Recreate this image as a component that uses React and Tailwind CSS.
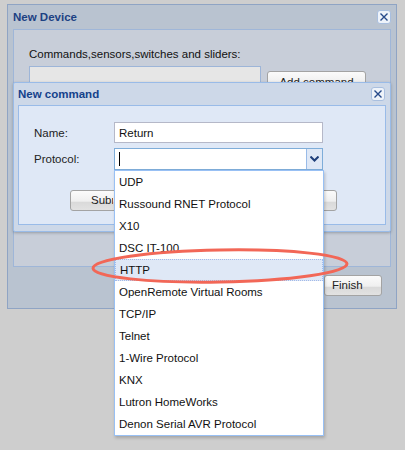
import React from "react";

const protocols = [
  "UDP",
  "Russound RNET Protocol",
  "X10",
  "DSC IT-100",
  "HTTP",
  "OpenRemote Virtual Rooms",
  "TCP/IP",
  "Telnet",
  "1-Wire Protocol",
  "KNX",
  "Lutron HomeWorks",
  "Denon Serial AVR Protocol",
];

function CloseBtn() {
  return (
    <div className="flex h-[14px] w-[14px] items-center justify-center rounded-[3px] border border-[#a9bfdf] bg-[#eef3fa]">
      <svg width="10" height="10" viewBox="0 0 10 10">
        <path d="M1.5 1.5 L8.5 8.5 M8.5 1.5 L1.5 8.5" stroke="#264a8a" strokeWidth="1.4" />
      </svg>
    </div>
  );
}

function Btn({ children, className = "" }) {
  return (
    <div
      className={`flex h-[21px] items-center overflow-hidden rounded-[3px] border border-[#a3a3a3] bg-[linear-gradient(#fbfbfb_0%,#efefef_55%,#d9d9d9_56%,#e2e2e2_100%)] pt-[1px] text-[11.5px] text-[#222] ${className}`}
    >
      {children}
    </div>
  );
}

export default function App() {
  return (
    <div className="relative h-[450px] w-[405px] overflow-hidden bg-[#cecece] pt-[4px] pl-[7px] font-['Liberation_Sans',Arial,sans-serif]">
      {/* New Device window (masked) */}
      <div className="flex h-[305px] w-[390px] flex-col border border-[#8fa4c4] bg-[#b9c3d0]">
        <div className="flex h-[24px] items-center justify-between pl-[5px] pr-[5px]">
          <span className="pt-[2px] text-[11.5px] font-bold text-[#1d4183]">New Device</span>
          <div className="mt-[-1px]">
            <CloseBtn />
          </div>
        </div>
        <div className="mx-[5px] h-[238px] border border-[#9fb6d8] bg-[#c8ced9] px-[15px] pt-[16px]">
          <div className="text-[11.5px] text-[#111]">Commands,sensors,switches and sliders:</div>
          <div className="mt-[3px] flex items-start gap-[6px]">
            <div className="h-[60px] w-[232px] border border-[#9db5d8] bg-[#e6e6e6]" />
            <Btn className="mt-[5px] w-[99px] justify-center">Add command</Btn>
          </div>
        </div>
        <div className="flex flex-1 items-start justify-end pr-[14px] pt-[8px]">
          <Btn className="w-[58px] pl-[7px]">Finish</Btn>
        </div>
      </div>

      {/* New command window */}
      <div className="absolute left-[13px] top-[82px] flex h-[150px] w-[378px] flex-col rounded-[2px] border border-[#99bbe8] bg-[#cdd8e8] shadow-[0_1px_3px_rgba(0,0,0,0.25)]">
        <div className="flex h-[22px] items-center justify-between pl-[4px] pr-[5px]">
          <span className="pt-[2px] text-[11.5px] font-bold text-[#15428b]">New command</span>
          <CloseBtn />
        </div>
        <div className="mx-[4px] h-[120px] border border-[#99bbe8] bg-[#dfe8f6] pt-[16px]">
          <div className="flex items-center">
            <span className="w-[95px] pl-[15px] pt-[2px] text-[11.5px] text-[#222]">Name:</span>
            <div className="flex h-[21px] w-[209px] items-center border border-[#b5b8c8] bg-white pl-[4px] pt-[2px] text-[11.5px] text-[#111]">
              Return
            </div>
          </div>
          <div className="mt-[5px] flex items-center">
            <span className="w-[95px] pl-[15px] pt-[2px] text-[11.5px] text-[#222]">Protocol:</span>
            <div className="flex h-[22px] w-[209px] border border-[#7eadd9] bg-white">
              <div className="flex flex-1 items-center pl-[4px]">
                <div className="h-[14px] w-px bg-black" />
              </div>
              <div className="flex w-[16px] items-center justify-center border-l border-[#99bbe8] bg-[#dfe8f6]">
                <svg width="9" height="6" viewBox="0 0 9 6">
                  <path d="M0.5 0.5 L4.5 4.5 L8.5 0.5" fill="none" stroke="#1f3f7a" strokeWidth="2" />
                </svg>
              </div>
            </div>
          </div>
          <div className="mt-[20px] flex gap-[20px] pl-[51px]">
            <Btn className="w-[120px] pl-[20px]">
              <span className="w-[22px] overflow-hidden whitespace-nowrap">Submit</span>
            </Btn>
            <Btn className="w-[127px] justify-center" />
          </div>
        </div>
      </div>

      {/* Protocol dropdown list */}
      <div className="absolute left-[114px] top-[170px] w-[210px] border border-[#98c0f4] bg-white shadow-[1px_2px_3px_rgba(0,0,0,0.2)]">
        {protocols.map((p) => (
          <div
            key={p}
            className={`flex h-[22px] items-center pl-[4px] pt-[2px] text-[11.5px] text-[#111] ${
              p === "HTTP" ? "border border-dotted border-[#a3bae9] bg-[#dfe8f6] pl-[3px]" : ""
            }`}
          >
            {p}
          </div>
        ))}
      </div>

      {/* Red highlight ellipse */}
      <svg className="pointer-events-none absolute left-0 top-0" width="405" height="450">
        <ellipse cx="220" cy="266" rx="127" ry="16" fill="none" stroke="#f26757" strokeWidth="3" transform="rotate(-1 220 266)" />
      </svg>
    </div>
  );
}
